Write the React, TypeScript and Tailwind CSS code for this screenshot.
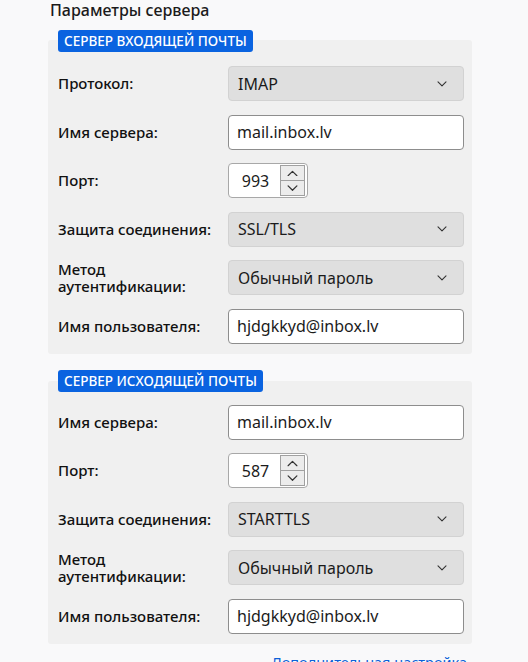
import React from "react";

const Chevron = ({ up = false, size = 10 }: { up?: boolean; size?: number }) => (
  <svg width={size} height={size * 0.6} viewBox="0 0 10 6" fill="none">
    <path
      d={up ? "M1 5.2L5 1.2L9 5.2" : "M1 0.8L5 4.8L9 0.8"}
      stroke="#333"
      strokeWidth="1.1"
      strokeLinecap="round"
      strokeLinejoin="round"
    />
  </svg>
);

const Label = ({ children }: { children: React.ReactNode }) => (
  <div className="w-[170px] shrink-0 text-[15px] leading-[17px] font-medium text-[#111]">{children}</div>
);

const Select = ({ value }: { value: string }) => (
  <div className="flex h-[35px] w-[236px] items-center justify-between rounded-[4px] border border-[#d2d2d2] bg-[#dfdfdf] pl-[9px] pr-[16px] text-[16px] text-[#1b1b1b]">
    <span>{value}</span>
    <Chevron />
  </div>
);

const Input = ({ value }: { value: string }) => (
  <div className="flex h-[35px] w-[236px] items-center rounded-[4px] border border-[#8d8d8d] bg-white pl-[8px] text-[16px] text-[#1b1b1b]">
    {value}
  </div>
);

const Port = ({ value }: { value: string }) => (
  <div className="flex h-[35px] w-[80px] items-center rounded-[4px] border border-[#a8a8a8] bg-white">
    <div className="flex flex-1 justify-center pl-[2px] text-[16px] text-[#1b1b1b]">{value}</div>
    <div className="mr-[2px] flex h-[31px] w-[25px] flex-col">
      <div className="flex flex-1 items-center justify-center border border-[#a0a0a0] bg-[#ececec]">
        <Chevron up size={11} />
      </div>
      <div className="-mt-px flex flex-1 items-center justify-center border border-[#a0a0a0] bg-[#ececec]">
        <Chevron size={11} />
      </div>
    </div>
  </div>
);

const Row = ({ label, children }: { label: React.ReactNode; children: React.ReactNode }) => (
  <div className="flex h-[35px] items-center">
    <Label>{label}</Label>
    {children}
  </div>
);

const Badge = ({ text }: { text: string }) => (
  <div className="relative z-10 ml-[10px] inline-flex h-[22px] items-center rounded-[3px] bg-[#0a63e0] px-[6px] text-[13.5px] font-medium text-white">
    {text}
  </div>
);

export default function App() {
  return (
    <div
      className="h-[662px] w-[528px] overflow-hidden bg-[#f9f9fa]"
      style={{ fontFamily: '"Noto Sans", "Open Sans", sans-serif' }}
    >
      <div className="pl-[50px] pt-[0px] text-[16px] leading-[20px] font-medium text-[#1b1b1b]">Параметры сервера</div>

      <div className="ml-[48px] mt-[8px] w-[424px]">
        <Badge text="СЕРВЕР ВХОДЯЩЕЙ ПОЧТЫ" />
        <div className="-mt-[12px] flex flex-col gap-[13.5px] rounded-[3px] bg-[#f0f0f0] pb-[10px] pl-[10px] pt-[26px]">
          <Row label="Протокол:">
            <Select value="IMAP" />
          </Row>
          <Row label="Имя сервера:">
            <Input value="mail.inbox.lv" />
          </Row>
          <Row label="Порт:">
            <Port value="993" />
          </Row>
          <Row label="Защита соединения:">
            <Select value="SSL/TLS" />
          </Row>
          <Row label={<>Метод<br />аутентификации:</>}>
            <Select value="Обычный пароль" />
          </Row>
          <Row label="Имя пользователя:">
            <Input value="hjdgkkyd@inbox.lv" />
          </Row>
        </div>

        <div className="mt-[14px]">
          <Badge text="СЕРВЕР ИСХОДЯЩЕЙ ПОЧТЫ" />
        </div>
        <div className="-mt-[11px] flex flex-col gap-[13.5px] rounded-[3px] bg-[#f0f0f0] pb-[10px] pl-[10px] pt-[24px]">
          <Row label="Имя сервера:">
            <Input value="mail.inbox.lv" />
          </Row>
          <Row label="Порт:">
            <Port value="587" />
          </Row>
          <Row label="Защита соединения:">
            <Select value="STARTTLS" />
          </Row>
          <Row label={<>Метод<br />аутентификации:</>}>
            <Select value="Обычный пароль" />
          </Row>
          <Row label="Имя пользователя:">
            <Input value="hjdgkkyd@inbox.lv" />
          </Row>
        </div>
        <div className="flex justify-end pr-[5px] pt-[8px] text-[14.5px] text-[#0b61d8]">Дополнительная настройка</div>
      </div>
    </div>
  );
}
